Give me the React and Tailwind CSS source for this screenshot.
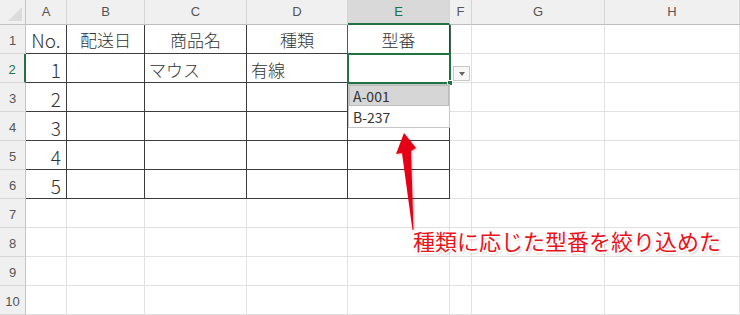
import React from 'react';

// ─── Sheet geometry ───────────────────────────────────────────────────────────
const COLS = ['', 'A', 'B', 'C', 'D', 'E', 'F', 'G', 'H'];
const ROWS = 10;

const CELLS = {
  '1-1': { text: 'No.', align: 'center', big: true },
  '1-2': { text: '配送日', align: 'center' },
  '1-3': { text: '商品名', align: 'center' },
  '1-4': { text: '種類', align: 'center' },
  '1-5': { text: '型番', align: 'center' },
  '2-1': { text: '1', align: 'right', big: true },
  '3-1': { text: '2', align: 'right', big: true },
  '4-1': { text: '3', align: 'right', big: true },
  '5-1': { text: '4', align: 'right', big: true },
  '6-1': { text: '5', align: 'right', big: true },
  '2-3': { text: 'マウス', align: 'left' },
  '2-4': { text: '有線', align: 'left' },
};

const FONT = "font-['Noto_Sans_CJK_JP',sans-serif]";

// ─── Column header cell ───────────────────────────────────────────────────────
function ColHeader({ index, label }) {
  if (index === 0) {
    return (
      <div className="flex items-end justify-end p-[3px] bg-[#f0f0f0] border-r border-b border-[#c4c4c4]">
        <div className="w-0 h-0 border-l-[14px] border-l-transparent border-b-[14px] border-b-[#dcdcdc]" />
      </div>
    );
  }
  const selected = label === 'E';
  return (
    <div
      className={`flex items-center justify-center text-[13px] font-['Liberation_Sans',sans-serif] border-r border-[#d6d6d6] ${
        selected
          ? 'bg-[#d9d9d9] text-[#217346] border-b-2 border-b-[#217346]'
          : 'bg-[#f0f0f0] text-[#555] border-b border-b-[#bdbdbd]'
      }`}
    >
      {label}
    </div>
  );
}

// ─── Row header cell ──────────────────────────────────────────────────────────
function RowHeader({ row }) {
  const selected = row === 2;
  return (
    <div
      className={`flex items-end justify-center pb-[3px] text-[13px] font-['Liberation_Sans',sans-serif] bg-[#f0f0f0] border-b border-b-[#d6d6d6] ${
        selected
          ? 'text-[#217346] border-r-2 border-r-[#217346]'
          : 'text-[#555] border-r border-r-[#c4c4c4]'
      }`}
    >
      {row}
    </div>
  );
}

// ─── Data cell ────────────────────────────────────────────────────────────────
function Cell({ row, col }) {
  const inTable = row <= 6 && col <= 5;
  const content = CELLS[`${row}-${col}`];
  const borders = inTable
    ? 'border-r border-b border-[#3c3c3c]'
    : 'border-r border-b border-[#e1e1e1]';
  const align = !content
    ? ''
    : content.align === 'center'
      ? 'justify-center'
      : content.align === 'right'
        ? 'justify-end pr-[5px]'
        : 'justify-start pl-[4px]';
  return (
    <div className={`flex items-center bg-white ${borders} ${align} ${row === 1 ? '' : 'pt-[2px]'}`}>
      {content && (
        <span
          className={`${FONT} font-light leading-none text-[#333] ${content.big ? 'text-[19px]' : 'text-[17px]'}`}
        >
          {content.text}
        </span>
      )}
    </div>
  );
}

// ─── App ──────────────────────────────────────────────────────────────────────
export default function App() {
  return (
    <div className="relative w-[740px] h-[315px] overflow-hidden bg-white">
      <div className="grid grid-cols-[26px_41px_78px_102px_101px_102px_22px_133px_135px] grid-rows-[25px_repeat(10,29px)]">
        {COLS.map((label, i) => (
          <ColHeader key={`h-${i}`} index={i} label={label} />
        ))}
        {Array.from({ length: ROWS }, (_, r) => r + 1).map(row => (
          <React.Fragment key={row}>
            <RowHeader row={row} />
            {COLS.slice(1).map((_, ci) => (
              <Cell key={`${row}-${ci + 1}`} row={row} col={ci + 1} />
            ))}
          </React.Fragment>
        ))}
      </div>

      {/* E1 greenish edges (selected column) */}
      <div className="absolute left-[347px] top-[25px] w-[104px] h-[30px] border-x border-[#3d6b50]" />

      {/* Active cell E2 with fill handle and dropdown button */}
      <div className="absolute left-[347px] top-[53px] w-[104px] h-[31px] border-2 border-[#217346]">
        <div className="absolute -right-[4px] -bottom-[4px] w-[6px] h-[6px] bg-[#217346] border border-white" />
        <div className="absolute -right-[21px] top-[11px] w-[17px] h-[15px] bg-[#f7f7f7] border border-[#c8c8c8] flex items-center justify-center">
          <div className="w-0 h-0 border-l-[3px] border-r-[3px] border-t-[4px] border-l-transparent border-r-transparent border-t-[#666]" />
        </div>
      </div>

      {/* Dropdown list */}
      <div className="absolute left-[348px] top-[84px] w-[102px] bg-white border border-[#c6c6c6] flex flex-col">
        <div className={`h-[21px] flex items-center pl-[3px] bg-[#d6d6d6] border border-[#bcbcbc] text-[14px] text-[#333] ${FONT} leading-none`}>
          A-001
        </div>
        <div className={`h-[21px] flex items-center pl-[4px] text-[14px] text-[#333] ${FONT} leading-none`}>
          B-237
        </div>
      </div>

      {/* Red arrow */}
      <svg className="absolute left-0 top-0" width="740" height="315" viewBox="0 0 740 315">
        <defs>
          <filter id="sh" x="-50%" y="-50%" width="200%" height="200%">
            <feDropShadow dx="1" dy="1" stdDeviation="1" floodColor="#000" floodOpacity="0.25" />
          </filter>
        </defs>
        <polygon
          points="404,133 416,148 411,151 413.5,230 412.5,230 402,153 396,154"
          fill="#e60012"
          filter="url(#sh)"
        />
      </svg>

      {/* Annotation */}
      <div
        className={`absolute left-[413px] top-[229px] text-[22px] leading-none font-normal text-[#e8141c] ${FONT} whitespace-nowrap [text-shadow:1.5px_0_0_#fff,-1.5px_0_0_#fff,0_1.5px_0_#fff,0_-1.5px_0_#fff,1px_1px_0_#fff,-1px_-1px_0_#fff,1px_-1px_0_#fff,-1px_1px_0_#fff,1px_2px_3px_rgba(0,0,0,0.35)]`}
      >
        種類に応じた型番を絞り込めた
      </div>
    </div>
  );
}
